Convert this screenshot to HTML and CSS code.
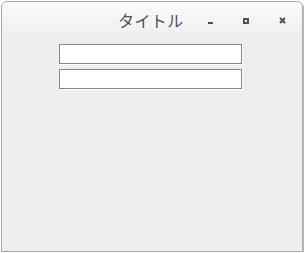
FILE: index.html
```
<!DOCTYPE html>
<html lang="ja">
<head>
    <meta charset="UTF-8">
    <title>タイトル</title>
    <link rel="stylesheet" href="styles.css">
</head>
<body>
    <div class="window">
        <div class="titlebar">
            <span class="title">タイトル</span>
            <div class="buttons">
                <span class="btn min"></span>
                <span class="btn max"></span>
                <span class="btn close">
                    <svg width="7" height="7" viewBox="0 0 7 7"><path d="M1 1L6 6M6 1L1 6" stroke="#46555e" stroke-width="2"/></svg>
                </span>
            </div>
        </div>
        <div class="content">
            <input class="field" type="text">
            <input class="field" type="text">
        </div>
    </div>
</body>
</html>
```
FILE: styles.css
```
body {
    margin: 0;
    background: #fff;
    font-family: "Noto Sans CJK JP", "DejaVu Sans", sans-serif;
}
.window {
    box-sizing: border-box;
    width: 302px;
    height: 251px;
    margin: 1px 0 0 1px;
    border: 1px solid #a9a9a9;
    border-radius: 6px 6px 0 0;
    background: #eeeeee;
    box-shadow: 1px 1px 1px rgba(0, 0, 0, 0.3);
    display: flex;
    flex-direction: column;
}
.titlebar {
    height: 36px;
    border-radius: 5px 5px 0 0;
    background: linear-gradient(#fbfbfb, #eeeeee);
    display: flex;
    align-items: center;
    position: relative;
}
.title {
    position: absolute;
    left: 116px;
    top: 7px;
    font-size: 16px;
    line-height: 22px;
    color: #46555e;
    letter-spacing: 0.4px;
}
.buttons {
    margin-left: auto;
    display: flex;
    align-items: center;
    margin-right: 16px;
    margin-top: 1px;
}
.btn {
    display: flex;
    align-items: center;
    justify-content: center;
    width: 7px;
    height: 7px;
}
.min {
    margin-right: 28px;
}
.min::after {
    content: "";
    width: 5px;
    height: 2px;
    background: #46555e;
    margin-top: 5px;
}
.max {
    margin-right: 30px;
}
.max::after {
    content: "";
    box-sizing: border-box;
    width: 6px;
    height: 6px;
    border: 2px solid #46555e;
}
.content {
    display: flex;
    flex-direction: column;
    align-items: flex-start;
    gap: 5px;
    padding: 6px 0 0 57px;
}
.field {
    box-sizing: border-box;
    width: 183px;
    height: 20px;
    margin: 0;
    padding: 0;
    border: 1px solid #7a8994;
    background: #fff;
    box-shadow: 1px 1px 0 #fff;
    outline: none;
}
```
